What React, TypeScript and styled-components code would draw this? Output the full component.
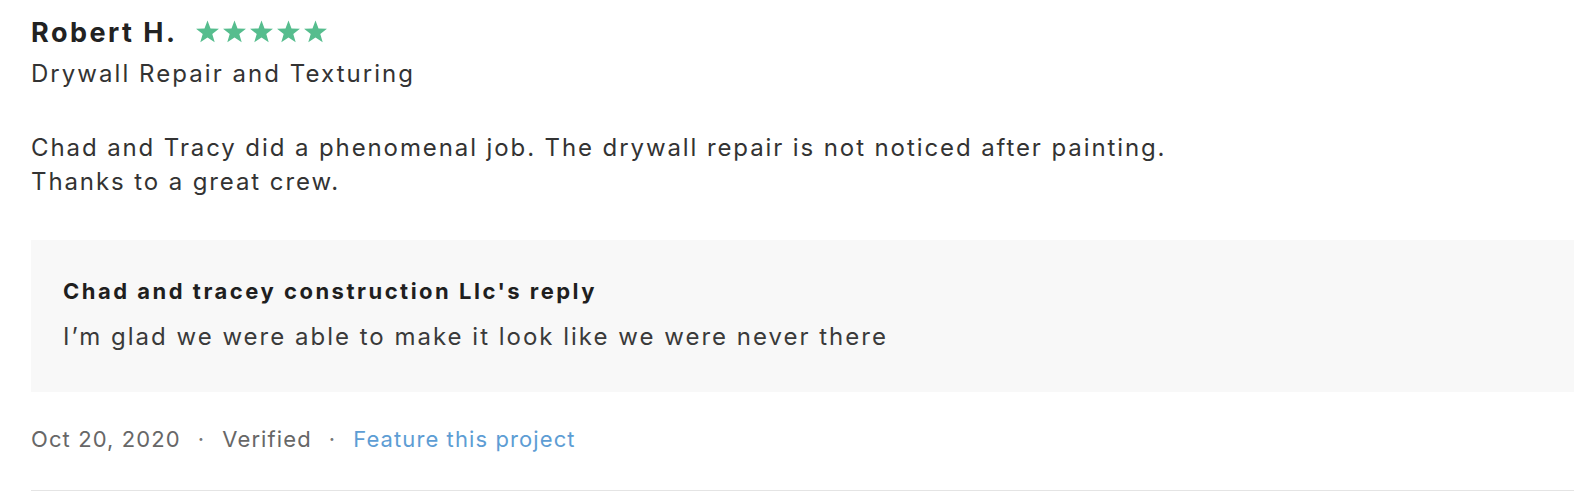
import React from "react";
import styled, { createGlobalStyle } from "styled-components";

const GlobalStyle = createGlobalStyle`
  html, body {
    margin: 0;
    padding: 0;
    background: #ffffff;
  }
  body {
    font-family: Inter, "Open Sans", Arial, sans-serif;
    -webkit-font-smoothing: antialiased;
  }
`;

const Review = styled.article`
  padding: 17px 0 0 31px;
`;

const Header = styled.div`
  display: flex;
  align-items: center;
  gap: 17px;
`;

const Name = styled.h3`
  margin: 0;
  font-size: 27px;
  line-height: 32px;
  font-weight: 700;
  letter-spacing: 2.5px;
  color: #222222;
`;

const Stars = styled.div`
  display: flex;
  gap: 2px;
  margin-top: -2px;
`;

const Service = styled.div`
  margin-top: 9px;
  font-size: 24px;
  line-height: 32px;
  letter-spacing: 2.05px;
  color: #333333;
`;

const Body = styled.p`
  margin: 41px 0 0;
  font-size: 24px;
  line-height: 34px;
  letter-spacing: 1.9px;
  color: #333333;
`;

const ReplyBox = styled.div`
  margin-top: 41px;
  background: #f8f8f8;
  padding: 36px 32px 0;
  height: 152px;
  box-sizing: border-box;
`;

const ReplyTitle = styled.div`
  font-size: 22px;
  line-height: 30px;
  font-weight: 700;
  letter-spacing: 2.5px;
  color: #1f1f1f;
`;

const ReplyText = styled.div`
  margin-top: 14px;
  font-size: 24px;
  line-height: 34px;
  letter-spacing: 2px;
  color: #3a3a3a;
`;

const Footer = styled.div`
  margin-top: 32px;
  padding-bottom: 36px;
  border-bottom: 1px solid #e4e4e4;
  display: flex;
  align-items: center;
  gap: 17px;
  font-size: 22px;
  line-height: 30px;
  letter-spacing: 1.1px;
  color: #676767;
`;

const Dot = styled.span`
  color: #777777;
`;

const FeatureLink = styled.a`
  color: #5d9dd4;
  text-decoration: none;
  cursor: pointer;
`;

const Star: React.FC = () => (
  <svg width="25" height="24" viewBox="0 0 24 23" aria-hidden="true">
    <polygon
      points="12,0.5 14.9,8.1 23,8.4 16.6,13.4 18.9,21.4 12,16.8 5.1,21.4 7.4,13.4 1,8.4 9.1,8.1"
      fill="#56bd8e"
    />
  </svg>
);

export default function App() {
  return (
    <>
      <GlobalStyle />
      <Review>
        <Header>
          <Name>Robert H.</Name>
          <Stars>
            {[0, 1, 2, 3, 4].map((i) => (
              <Star key={i} />
            ))}
          </Stars>
        </Header>
        <Service>Drywall Repair and Texturing</Service>
        <Body>
          Chad and Tracy did a phenomenal job. The drywall repair is not noticed after painting.
          <br />
          Thanks to a great crew.
        </Body>
        <ReplyBox>
          <ReplyTitle>Chad and tracey construction Llc's reply</ReplyTitle>
          <ReplyText>I’m glad we were able to make it look like we were never there</ReplyText>
        </ReplyBox>
        <Footer>
          <span>Oct 20, 2020</span>
          <Dot>·</Dot>
          <span>Verified</span>
          <Dot>·</Dot>
          <FeatureLink>Feature this project</FeatureLink>
        </Footer>
      </Review>
    </>
  );
}
